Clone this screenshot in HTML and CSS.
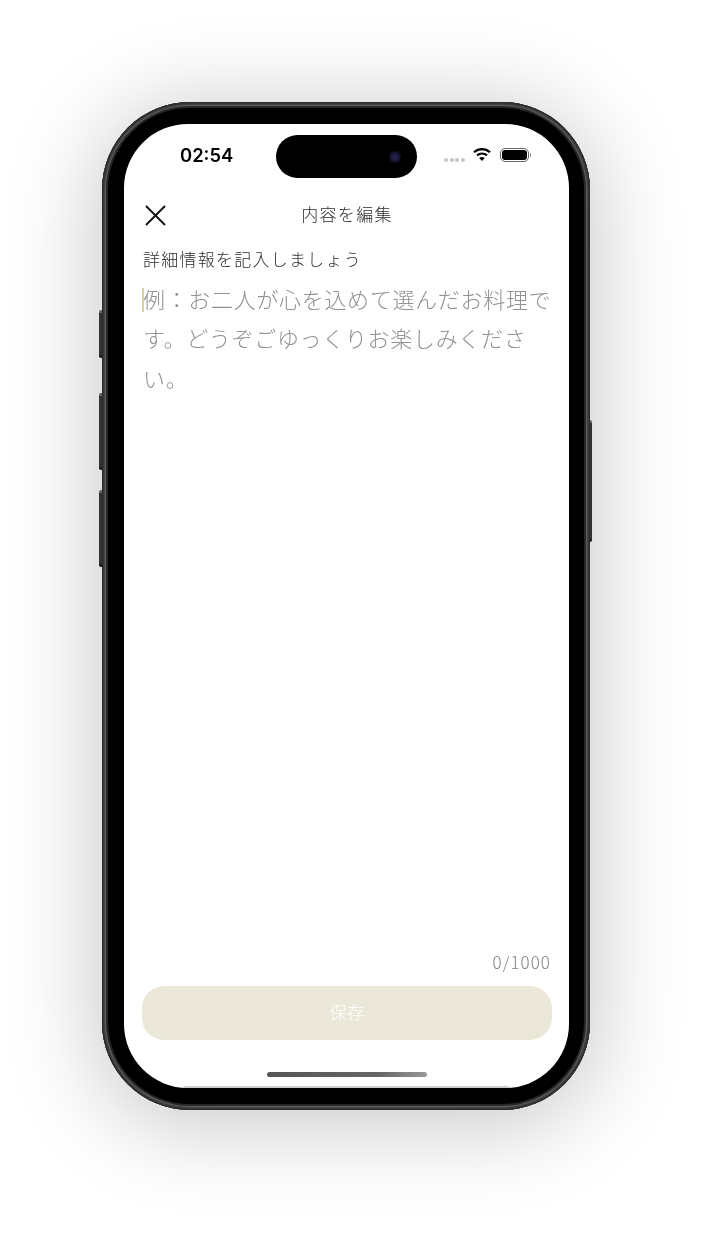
FILE: index.html
```html
<!DOCTYPE html>
<html lang="ja">
<head>
<meta charset="utf-8">
<title>内容を編集</title>
<link rel="stylesheet" href="styles.css">
</head>
<body>
<div class="stage">
  <div class="phone">
    <span class="side-btn side-mute"></span>
    <span class="side-btn side-up"></span>
    <span class="side-btn side-down"></span>
    <span class="side-btn side-power"></span>
    <div class="bezel">
      <div class="screen">
        <div class="island"><span class="lens"></span></div>
        <div class="status">
          <span class="time">02:54</span>
          <div class="status-right">
            <div class="dots"><i></i><i></i><i></i><i></i></div>
            <svg class="wifi" width="18" height="15" viewBox="0 0 18 15">
              <path d="M1 5.2C5.6 1 12.4 1 17 5.2" fill="none" stroke="#000" stroke-width="2.2"/>
              <path d="M4 8.4C6.9 5.9 11.1 5.9 14 8.4" fill="none" stroke="#000" stroke-width="2.2"/>
              <path d="M6.2 11 9 14 11.8 11C10.2 9.6 7.8 9.6 6.2 11Z" fill="#000"/>
            </svg>
            <div class="battery"><span class="battery-fill"></span></div>
            <span class="battery-cap"></span>
          </div>
        </div>
        <div class="nav">
          <svg class="close" width="23" height="23" viewBox="0 0 23 23">
            <path d="M2 2 21 21M21 2 2 21" fill="none" stroke="#111" stroke-width="1.9"/>
          </svg>
          <h1 class="title">内容を編集</h1>
        </div>
        <p class="label">詳細情報を記入しましょう</p>
        <div class="field">
          <span class="caret"></span>
          <p class="placeholder">例：お二人が心を込めて選んだお料理です。どうぞごゆっくりお楽しみください。</p>
        </div>
        <div class="counter">0/1000</div>
        <button class="save" type="button">保存</button>
        <div class="home-wrap"><span class="home"></span></div>
        <span class="screen-edge"></span>
      </div>
    </div>
  </div>
</div>
</body>
</html>
```
FILE: styles.css
```css
* { box-sizing: border-box; }
html, body { margin: 0; padding: 0; background: #fff; }
body {
  width: 714px;
  height: 1233px;
  overflow: hidden;
  font-family: "Noto Sans CJK JP", "Noto Sans", sans-serif;
}
.stage { padding: 102px 0 0 102px; }
.phone {
  position: relative;
  width: 488px;
  height: 1008px;
  padding: 6px;
  border-radius: 88px;
  background: #262626;
  box-shadow:
    inset 0 0 0 1px #2c2c2c,
    inset 0 0 0 2px #383838,
    inset 0 0 0 3px #444,
    inset 0 0 0 4px #5e5e5e,
    0 10px 90px 6px rgba(0, 0, 0, .22);
}
.bezel {
  height: 100%;
  padding: 16px 15px 16px 16px;
  border-radius: 82px;
  background: #000;
}
.screen {
  position: relative;
  display: flex;
  flex-direction: column;
  height: 100%;
  padding: 0 17px 0 18px;
  overflow: hidden;
  border-radius: 64px;
  background: #fff;
  will-change: transform;
}
.screen-edge {
  position: absolute;
  left: 60px;
  right: 60px;
  bottom: 0;
  height: 2px;
  background: #cbcbcb;
}
.side-btn {
  position: absolute;
  width: 3px;
  background: #333;
  border-radius: 2px 0 0 2px;
  border-top: 3px solid #666;
  border-bottom: 3px solid #1c1c1c;
}
.side-mute { left: -3px; top: 208px; height: 48px; }
.side-up { left: -3px; top: 291px; height: 77px; }
.side-down { left: -3px; top: 388px; height: 77px; }
.side-power { right: -2px; top: 318px; height: 122px; width: 2px; border-radius: 0 2px 2px 0; }
.island {
  position: absolute;
  left: 152px;
  top: 11px;
  width: 141px;
  height: 43px;
  border-radius: 22px;
  background: #000;
}
.lens {
  position: absolute;
  left: 113px;
  top: 16px;
  width: 12px;
  height: 12px;
  border-radius: 50%;
  background: radial-gradient(circle, #2a2a66 0, #14142e 50%, #070710 100%);
}
.status {
  display: flex;
  align-items: center;
  justify-content: space-between;
  height: 24px;
  margin-top: 19px;
  padding-left: 38px;
  flex: none;
}
.time {
  font-family: Inter, "Liberation Sans", sans-serif;
  font-size: 18.4px;
  font-weight: 600;
  color: #000;
}
.status-right {
  display: flex;
  align-items: center;
  height: 24px;
  padding-right: 21px;
}
.dots { display: flex; gap: 1.5px; margin: 9px 8px 0 0; }
.dots i { width: 4px; height: 4px; border-radius: 50%; background: #c4c4c4; }
.wifi { margin-right: 9px; margin-top: -2px; }
.battery {
  width: 29px;
  height: 14px;
  padding: 1px;
  margin-top: -1px;
  border: 1px solid #666;
  border-radius: 5px;
}
.battery-fill { display: block; height: 100%; border-radius: 3px; background: #000; }
.battery-cap { width: 1.5px; height: 4px; margin-left: 1px; margin-top: -1px; background: #888; border-radius: 0 1px 1px 0; }
.nav {
  position: relative;
  display: flex;
  align-items: center;
  justify-content: center;
  height: 30px;
  margin-top: 33px;
  padding-bottom: 2px;
  flex: none;
}
.close { position: absolute; left: 2px; top: 4px; }
.title {
  margin: 0;
  font-size: 17px;
  font-weight: 300;
  line-height: 28px;
  letter-spacing: 1.3px;
  color: #2b2b2b;
}
.label {
  margin: 14px 0 0 1px;
  font-size: 17px;
  font-weight: 300;
  line-height: 30px;
  letter-spacing: 1.25px;
  color: #2b2b2b;
  flex: none;
}
.field {
  position: relative;
  flex: 1;
  min-height: 0;
  margin-top: 5px;
}
.caret {
  position: absolute;
  left: 0;
  top: 9px;
  width: 2px;
  height: 24px;
  background: #d9cfa6;
}
.placeholder {
  margin: 0;
  padding-left: 1px;
  width: 410px;
  font-size: 22px;
  font-weight: 300;
  line-height: 39.3px;
  letter-spacing: .68px;
  color: #929292;
}
.counter {
  flex: none;
  width: 409px;
  font-size: 17px;
  font-weight: 300;
  line-height: 24px;
  text-align: right;
  color: #858585;
  letter-spacing: 1.05px;
}
.save {
  display: block;
  flex: none;
  width: 410px;
  height: 54px;
  margin-top: 12px;
  padding-bottom: 4px;
  border: 0;
  border-radius: 22px;
  background: #ece8d9;
  color: #fff;
  font-family: inherit;
  font-size: 17.5px;
  font-weight: 300;
}
.home-wrap {
  flex: none;
  display: flex;
  justify-content: center;
  padding: 32px 0 0;
  height: 48px;
}
.home {
  display: block;
  width: 160px;
  height: 5px;
  border-radius: 3px;
  background: linear-gradient(90deg, #555 0, #666 70%, #999 100%);
}
```
